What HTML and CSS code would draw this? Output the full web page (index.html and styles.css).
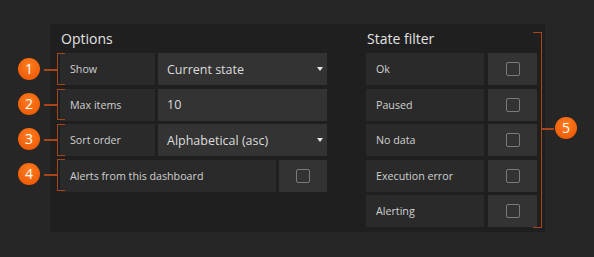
FILE: index.html
```html
<!DOCTYPE html>
<html lang="en">
<head>
    <meta charset="UTF-8">
    <title>Alert list options</title>
    <link rel="stylesheet" href="styles.css">
</head>
<body>
    <div class="stage">
        <div class="panel">
            <div class="section options">
                <h5 class="title">Options</h5>
                <div class="row">
                    <div class="label">Show</div>
                    <div class="select">Current state<span class="caret"></span></div>
                </div>
                <div class="row">
                    <div class="label">Max items</div>
                    <div class="select">10</div>
                </div>
                <div class="row">
                    <div class="label">Sort order</div>
                    <div class="select">Alphabetical (asc)<span class="caret"></span></div>
                </div>
                <div class="row">
                    <div class="label wide">Alerts from this dashboard</div>
                    <div class="check"><span class="box"></span></div>
                </div>
            </div>
            <div class="section filter">
                <h5 class="title">State filter</h5>
                <div class="row">
                    <div class="label">Ok</div>
                    <div class="check"><span class="box"></span></div>
                </div>
                <div class="row">
                    <div class="label">Paused</div>
                    <div class="check"><span class="box"></span></div>
                </div>
                <div class="row">
                    <div class="label">No data</div>
                    <div class="check"><span class="box"></span></div>
                </div>
                <div class="row">
                    <div class="label">Execution error</div>
                    <div class="check"><span class="box"></span></div>
                </div>
                <div class="row">
                    <div class="label">Alerting</div>
                    <div class="check"><span class="box"></span></div>
                </div>
            </div>
        </div>

        <!-- callouts -->
        <div class="bracket left" style="top: 53px; height: 32px;"></div>
        <div class="bracket left" style="top: 89px; height: 31px;"></div>
        <div class="bracket left" style="top: 124px; height: 32px;"></div>
        <div class="bracket left" style="top: 159px; height: 32px;"></div>
        <div class="link left" style="top: 69px;"></div>
        <div class="link left" style="top: 104px;"></div>
        <div class="link left" style="top: 139px;"></div>
        <div class="link left" style="top: 174px;"></div>
        <div class="badge left" style="top: 58px;">1</div>
        <div class="badge left" style="top: 93px;">2</div>
        <div class="badge left" style="top: 128px;">3</div>
        <div class="badge left" style="top: 163px;">4</div>

        <div class="bracket right" style="top: 32px; height: 196px;"></div>
        <div class="link right" style="top: 128px;"></div>
        <div class="badge right" style="top: 117px;">5</div>
    </div>
</body>
</html>
```
FILE: styles.css
```css
body {
    margin: 0;
    background-color: #262626;
    font-family: "Open Sans", "Liberation Sans", sans-serif;
    color: #d8d9da;
}
.stage {
    position: relative;
    width: 594px;
    height: 257px;
    padding-top: 24px;
    box-sizing: border-box;
}
.panel {
    display: flex;
    gap: 39px;
    margin-left: 50px;
    width: 495px;
    height: 208px;
    padding: 5px 8px 0 10px;
    box-sizing: border-box;
    background-color: #1f1f1f;
}
.section {
    display: flex;
    flex-direction: column;
    gap: 3.5px;
}
.options {
    width: 267px;
}
.filter {
    width: 171px;
}
.title {
    margin: 0 0 0.5px 1px;
    font-size: 14px;
    font-weight: 400;
    line-height: 20px;
    color: #e3e3e3;
}
.row {
    display: flex;
    height: 32px;
    gap: 3px;
}
.label {
    display: flex;
    align-items: center;
    width: 95px;
    padding-left: 10px;
    box-sizing: border-box;
    background-color: #2a2a2a;
    font-size: 10.7px;
    color: #d0d0d0;
}
.options .label.wide {
    flex: 1;
}
.filter .label {
    flex: 1;
}
.select {
    position: relative;
    display: flex;
    align-items: center;
    flex: 1;
    padding-left: 9px;
    background-color: #333333;
    font-size: 12.5px;
    color: #dcdcdc;
}
.caret {
    position: absolute;
    right: 4px;
    top: 14px;
    width: 0;
    height: 0;
    border-left: 3px solid transparent;
    border-right: 3px solid transparent;
    border-top: 4px solid #e6e6e6;
}
.check {
    display: flex;
    align-items: center;
    justify-content: center;
    width: 48px;
    background-color: #333333;
}
.filter .row {
    gap: 4px;
}
.filter .check {
    width: 49px;
}
.box {
    width: 12px;
    height: 12px;
    border: 1.5px solid #7a7a7a;
    border-radius: 2px;
}
.bracket {
    position: absolute;
    box-sizing: border-box;
    border: 1.5px solid #a8461a;
}
.bracket.left {
    left: 57px;
    width: 8px;
    border-right: none;
}
.bracket.right {
    left: 533px;
    width: 9px;
    border-left: none;
}
.link {
    position: absolute;
    height: 1.5px;
    background-color: #a8461a;
}
.link.left {
    left: 44px;
    width: 14px;
}
.link.right {
    left: 541px;
    width: 13px;
}
.badge {
    position: absolute;
    width: 22px;
    height: 22px;
    border-radius: 50%;
    background: radial-gradient(circle at 50% 35%, #ff7d1e, #f05f0a 70%, #e8560a);
    color: #ffffff;
    font-size: 14px;
    line-height: 22px;
    text-align: center;
}
.badge.left {
    left: 18px;
}
.badge.right {
    left: 555px;
}
```
